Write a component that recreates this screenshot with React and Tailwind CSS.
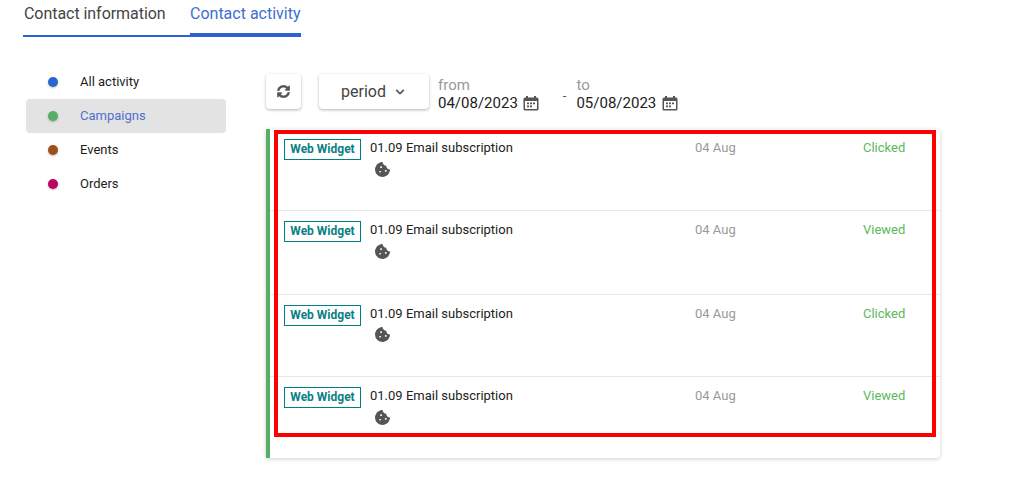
import { FaChevronDown, FaCookieBite, FaSyncAlt } from 'react-icons/fa';

const filters = [
    { name: 'All activity', dot: 'bg-[#2b63cf]' },
    { name: 'Campaigns', dot: 'bg-[#56ad66]', active: true },
    { name: 'Events', dot: 'bg-[#9c4f16]' },
    { name: 'Orders', dot: 'bg-[#b8045f]' },
];

const rows = [
    { status: 'Clicked', height: 'h-[82px]', cookie: 'mt-[6px]' },
    { status: 'Viewed', height: 'h-[84px]', cookie: 'mt-[6px]' },
    { status: 'Clicked', height: 'h-[82px]', cookie: 'mt-[5px]' },
    { status: 'Viewed', height: 'h-[81px]', cookie: 'mt-[6px]' },
];

const CalendarIcon = () => (
    <svg viewBox="0 0 16 16" className="-mt-px h-[16px] w-[16px] text-[#555]" fill="currentColor">
        <path d="M3 1h2v1.5h6V1h2v1.5h1a1.5 1.5 0 0 1 1.5 1.5v10a1.5 1.5 0 0 1-1.5 1.5H2A1.5 1.5 0 0 1 .5 14V4A1.5 1.5 0 0 1 2 2.5h1V1zM2 6v8h12V6H2z" />
        <path d="M4 7.5h2v1.7H4zM7 7.5h2v1.7H7zM10 7.5h2v1.7h-2zM4 10.5h2v1.7H4zM7 10.5h2v1.7H7z" />
    </svg>
);

const DateField = ({ label, value, gap }) => (
    <div className="flex flex-col">
        <span className="text-[15px] leading-[18px] text-[#999]">{label}</span>
        <span className={`flex items-center whitespace-nowrap text-[15px] leading-[18px] text-[#222] ${gap}`}>
            {value}
            <CalendarIcon />
        </span>
    </div>
);

const App = () => {
    return (
        <div className="relative h-[485px] w-[1017px] overflow-hidden bg-white font-['Roboto',sans-serif]">
            {/* Tabs */}
            <div className="ml-[23px] flex h-[37px] w-[278px] border-b-2 border-[#2b63cf] text-[16px]">
                <div className="w-[167px] whitespace-nowrap pl-px pt-[3px] leading-[22px] tracking-[-0.05px] text-[#444]">Contact information</div>
                <div className="-mb-[2px] w-[111px] whitespace-nowrap border-b-[4px] border-[#2b63cf] pt-[3px] leading-[22px] text-[#3e6fd0]">Contact activity</div>
            </div>

            <div className="flex">
                {/* Activity filter */}
                <div className="ml-[26px] mt-[28px] w-[200px]">
                    {filters.map((f) => (
                        <div
                            key={f.name}
                            className={`flex h-[34px] items-center rounded-[4px] pl-[22px] text-[13px] ${f.active ? 'bg-[#e3e3e3] text-[#4f6fd0]' : 'text-[#1c1c1c]'}`}
                        >
                            <span className={`h-[10px] w-[10px] rounded-full shadow-[0_1px_2px_rgba(0,0,0,0.25)] ${f.dot}`}></span>
                            <span className="ml-[22px]">{f.name}</span>
                        </div>
                    ))}
                </div>

                <div className="ml-[40px] w-[674px]">
                    {/* Toolbar */}
                    <div className="mt-[37px] flex h-[55px]">
                        <button className="flex h-[35px] w-[35px] items-center justify-center rounded-[4px] bg-white text-[13px] text-[#555] shadow-[0_1px_3px_rgba(0,0,0,0.3)]">
                            <FaSyncAlt stroke="currentColor" strokeWidth={15} />
                        </button>
                        <button className="ml-[18px] flex h-[35px] w-[110px] items-center justify-center gap-[9px] rounded-[4px] bg-white pr-[2px] text-[16px] text-[#444] shadow-[0_1px_3px_rgba(0,0,0,0.3)]">
                            period
                            <FaChevronDown className="mt-px text-[10px] text-[#555]" />
                        </button>
                        <div className="ml-[9px] mt-[2px]">
                            <DateField label="from" value="04/08/2023" gap="gap-[5px]" />
                        </div>
                        <span className="ml-[24px] mt-[13px] text-[13px] leading-[18px] text-[#555]">-</span>
                        <div className="ml-[10px] mt-[2px]">
                            <DateField label="to" value="05/08/2023" gap="gap-[6px]" />
                        </div>
                    </div>

                    {/* Campaign list */}
                    <div className="h-[329px] rounded-r-[4px] border-l-[4px] border-[#56ad66] bg-white shadow-[0_1px_4px_rgba(0,0,0,0.2)]">
                        {rows.map((r, i) => (
                            <div key={i} className={`flex border-b border-[#e8e8e8] pl-[14px] pt-[10px] ${r.height} ${i === 3 ? 'border-b-0' : ''}`}>
                                <div className="h-[21px] w-[77px] border border-[#008080] text-center text-[12px] font-bold leading-[19px] text-[#0b7f86]">
                                    Web Widget
                                </div>
                                <div className="ml-[9px] w-[325px] pt-px">
                                    <div className="whitespace-nowrap text-[13px] leading-[16px] text-[#222]">01.09 Email subscription</div>
                                    <FaCookieBite className={`ml-[5px] text-[15px] text-[#555] ${r.cookie}`} />
                                </div>
                                <div className="w-[168px] pt-px text-[13px] leading-[16px] text-[#999]">04 Aug</div>
                                <div className="pt-px text-[13px] leading-[16px] text-[#5cb85c]">{r.status}</div>
                            </div>
                        ))}
                    </div>
                </div>
            </div>

            {/* Red highlight drawn over the list */}
            <div className="absolute left-[274px] top-[130px] h-[307px] w-[662px] border-[4px] border-[#ff0000]"></div>
        </div>
    );
};

export default App;
